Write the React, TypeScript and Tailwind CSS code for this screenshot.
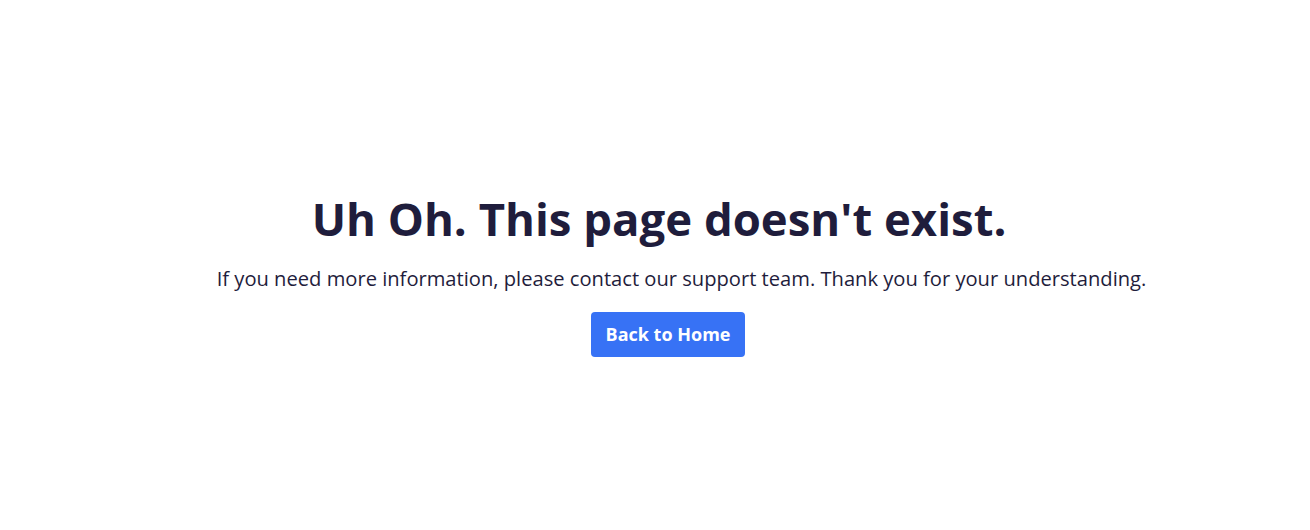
export default function App() {
  return (
    <div className="w-full h-[530px] bg-white flex flex-col items-center text-center pt-[190px]" style={{ fontFamily: '"Open Sans", "Noto Sans", sans-serif' }}>
      <h1 className="ml-[8px] text-[45.5px] leading-[56px] font-bold text-[#1f1d3c]">Uh Oh. This page doesn't exist.</h1>
      <p className="ml-[53px] mt-[18px] text-[20.15px] leading-[28px] text-[#1f1d3c]">If you need more information, please contact our support team. Thank you for your understanding.</p>
      <button className="ml-[26px] mt-[20px] h-[45px] px-[15px] rounded-[4px] bg-[#3772f5] text-white text-[18px] font-bold">Back to Home</button>
    </div>
  );
}
